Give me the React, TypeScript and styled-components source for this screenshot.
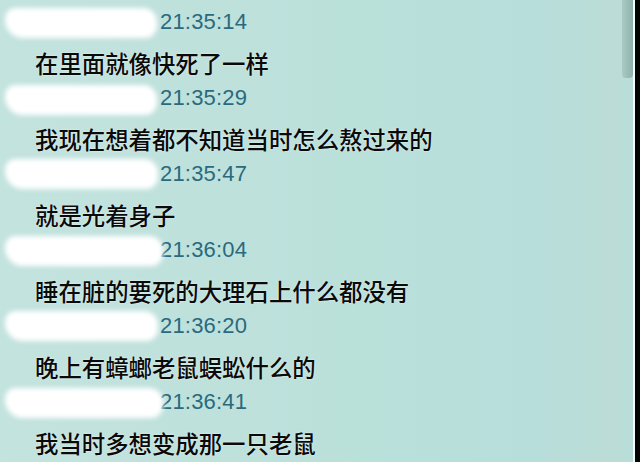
import React, { FC } from 'react'
import styled, { createGlobalStyle } from 'styled-components'

const GlobalStyle = createGlobalStyle`
  html, body {
    margin: 0;
    padding: 0;
    background: #000;
  }
`

const SCREEN = styled.div`
  width: 640px;
  height: 462px;
  overflow: hidden;
  display: flex;
  background: #020504;
`

const CHAT_PANE = styled.div`
  flex: 1;
  display: flex;
  flex-direction: column;
  padding-top: 6px;
  background: linear-gradient(90deg, #c3e3de 0%, #bfe1dc 30%, #bae0da 60%, #b7dedb 85%, #bcdcd6 100%);
`

const SCROLL_TRACK = styled.div`
  width: 11px;
  background: #b9ddd8;
  border-right: 2px solid #f4fbfa;
`

const SCROLL_THUMB = styled.div`
  height: 78px;
  background: linear-gradient(90deg, #a9c9c4, #8fb2ad);
  border-radius: 0 0 4px 4px;
`

const EDGE = styled.div`
  width: 5px;
  background: #020504;
`

const BLOCK = styled.div`
  display: flex;
  flex-direction: column;
  height: 76px;
`

const HEADER = styled.div`
  position: relative;
  height: 32px;
  display: flex;
  align-items: center;
  padding-left: 160px;
`

// white smudge hiding the sender name
const REDACTION = styled.div<{ $w: number; $top: number }>`
  position: absolute;
  left: 5px;
  top: ${({ $top }) => $top}px;
  width: ${({ $w }) => $w}px;
  height: 30px;
  background: #fff;
  border-radius: 10px 14px 12px 18px;
  filter: blur(2.5px);
  z-index: 1;
`

const TIME = styled.span`
  font-family: "Liberation Sans", Arial, sans-serif;
  font-size: 22px;
  color: #2a6a7e;
  letter-spacing: 0.2px;
`

const MESSAGE = styled.div`
  padding: 9px 0 3px 35px;
  height: 32px;
  line-height: 32px;
  font-family: "Noto Sans CJK SC", "Noto Sans", sans-serif;
  font-size: 23.4px;
  font-weight: 500;
  color: #0a0a0a;
  text-shadow: 0 0 2px rgba(255, 255, 255, 0.8);
  white-space: nowrap;
`

const messages = [
  { time: '21:35:14', text: '在里面就像快死了一样', w: 152, top: 2 },
  { time: '21:35:29', text: '我现在想着都不知道当时怎么熬过来的', w: 152, top: 3 },
  { time: '21:35:47', text: '就是光着身子', w: 153, top: 1 },
  { time: '21:36:04', text: '睡在脏的要死的大理石上什么都没有', w: 158, top: 2 },
  { time: '21:36:20', text: '晚上有蟑螂老鼠蜈蚣什么的', w: 153, top: 1 },
  { time: '21:36:41', text: '我当时多想变成那一只老鼠', w: 158, top: 2 },
]

const App: FC = () => (
  <>
    <GlobalStyle />
    <SCREEN>
      <CHAT_PANE>
        {messages.map((m) => (
          <BLOCK key={m.time}>
            <HEADER>
              <REDACTION $w={m.w} $top={m.top} />
              <TIME>{m.time}</TIME>
            </HEADER>
            <MESSAGE>{m.text}</MESSAGE>
          </BLOCK>
        ))}
      </CHAT_PANE>
      <SCROLL_TRACK>
        <SCROLL_THUMB />
      </SCROLL_TRACK>
      <EDGE />
    </SCREEN>
  </>
)

export default App
